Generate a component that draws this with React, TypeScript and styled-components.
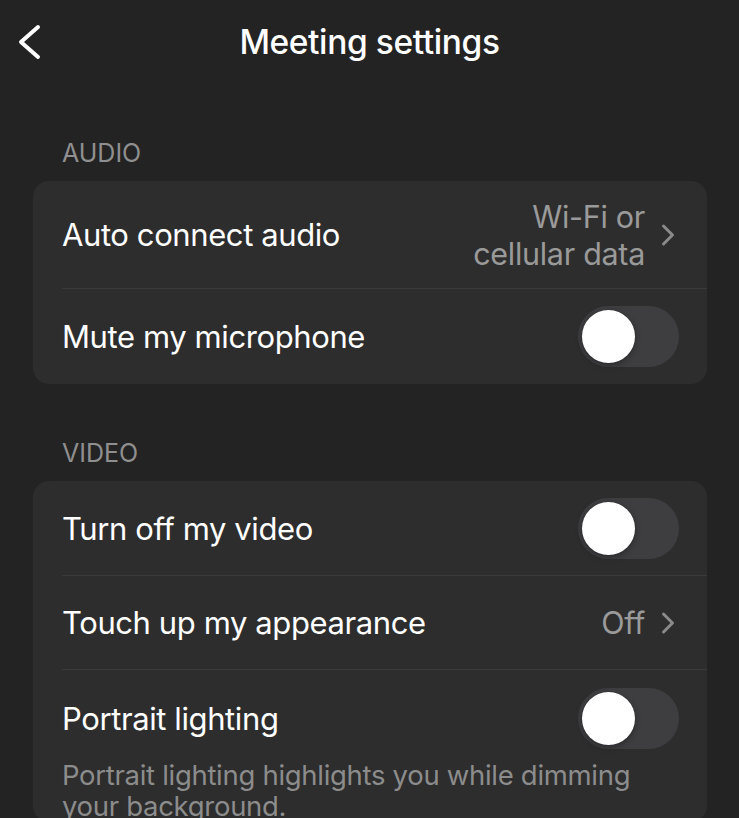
import React from "react";
import styled, { createGlobalStyle } from "styled-components";

const Global = createGlobalStyle`
  html, body { margin: 0; padding: 0; background: #232323; }
  body { font-family: Inter, "Noto Sans", "Liberation Sans", sans-serif; -webkit-font-smoothing: antialiased; }
  * { box-sizing: border-box; }
`;

const Page = styled.div`
  width: 739px;
  height: 818px;
  overflow: hidden;
  background: #232323;
  color: #ffffff;
`;

const Header = styled.header`
  height: 84px;
  display: grid;
  grid-template-columns: 60px 1fr 60px;
  align-items: center;
`;

const BackButton = styled.button`
  background: none;
  border: none;
  padding: 0 0 0 14px;
  height: 40px;
  display: flex;
  align-items: center;
  color: #fff;
  cursor: pointer;
`;

const Title = styled.h1`
  margin: 0;
  text-align: center;
  font-size: 33.5px;
  font-weight: 500;
  letter-spacing: -0.4px;
`;

const Content = styled.main`
  padding: 54px 32px 0 33px;
  display: flex;
  flex-direction: column;
`;

const SectionLabel = styled.div`
  padding-left: 29px;
  font-size: 25px;
  color: #8f8f8f;
  height: 43px;
  line-height: 30px;
`;

const Card = styled.section<{ $mb?: number }>`
  background: #2d2d2d;
  border-radius: 16px;
  margin-bottom: ${(p) => p.$mb ?? 0}px;
  overflow: hidden;
`;

const Row = styled.div<{ $h: number; $last?: boolean }>`
  height: ${(p) => p.$h}px;
  margin-left: 29px;
  padding-right: 29px;
  display: flex;
  align-items: center;
  justify-content: space-between;
  border-bottom: ${(p) => (p.$last ? "none" : "1px solid #3a3a3a")};
`;

const Label = styled.span`
  font-size: 31px;
  letter-spacing: -0.4px;
  color: #fff;
`;

const ValueWrap = styled.div`
  display: flex;
  align-items: center;
  gap: 15px;
  color: #9a9a9a;
  margin-right: 2px;
`;

const Value = styled.span`
  font-size: 30.5px;
  line-height: 37px;
  text-align: right;
  letter-spacing: -0.3px;
`;

const Track = styled.div<{ $on?: boolean }>`
  width: 101px;
  height: 61px;
  border-radius: 31px;
  background: ${(p) => (p.$on ? "#34c759" : "#3e3e41")};
  padding: 4px;
  display: flex;
  justify-content: ${(p) => (p.$on ? "flex-end" : "flex-start")};
  margin-right: -1px;
`;

const Knob = styled.div`
  width: 53px;
  height: 53px;
  border-radius: 50%;
  background: #fff;
  box-shadow: 0 2px 6px rgba(0, 0, 0, 0.35);
`;

const Note = styled.p`
  margin: -6px 0 0 29px;
  padding-right: 29px;
  font-size: 27.5px;
  line-height: 31px;
  color: #8c8c8c;
  letter-spacing: -0.3px;
`;

const Chevron = () => (
  <svg width="16" height="24" viewBox="0 0 16 24" fill="none">
    <path d="M3.5 3l9 9-9 9" stroke="#8a8a8a" strokeWidth="3" strokeLinecap="round" strokeLinejoin="round" />
  </svg>
);

const Toggle = ({ on }: { on?: boolean }) => (
  <Track $on={on}>
    <Knob />
  </Track>
);

export default function App() {
  return (
    <Page>
      <Global />
      <Header>
        <BackButton aria-label="Back">
          <svg width="28" height="40" viewBox="0 0 28 40" fill="none">
            <path d="M24 5L7 20l17 15" stroke="#fff" strokeWidth="4" strokeLinecap="round" strokeLinejoin="round" />
          </svg>
        </BackButton>
        <Title>Meeting settings</Title>
        <div />
      </Header>
      <Content>
        <SectionLabel>AUDIO</SectionLabel>
        <Card $mb={54}>
          <Row $h={108}>
            <Label>Auto connect audio</Label>
            <ValueWrap>
              <Value>
                Wi-Fi or
                <br />
                cellular data
              </Value>
              <Chevron />
            </ValueWrap>
          </Row>
          <Row $h={95} $last>
            <Label>Mute my microphone</Label>
            <Toggle />
          </Row>
        </Card>
        <SectionLabel>VIDEO</SectionLabel>
        <Card>
          <Row $h={95}>
            <Label>Turn off my video</Label>
            <Toggle />
          </Row>
          <Row $h={94}>
            <Label>Touch up my appearance</Label>
            <ValueWrap>
              <Value>Off</Value>
              <Chevron />
            </ValueWrap>
          </Row>
          <Row $h={96} $last>
            <Label>Portrait lighting</Label>
            <Toggle />
          </Row>
          <Note>Portrait lighting highlights you while dimming your background.</Note>
        </Card>
      </Content>
    </Page>
  );
}
